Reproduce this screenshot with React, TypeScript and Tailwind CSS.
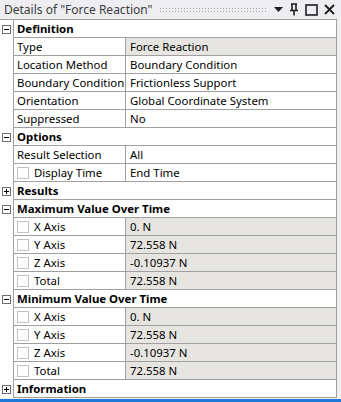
import React from "react";

type Row =
  | { kind: "section"; label: string; open: boolean }
  | { kind: "prop"; name: string; value: string; check?: boolean; grey?: boolean };

const rows: Row[] = [
  { kind: "section", label: "Definition", open: true },
  { kind: "prop", name: "Type", value: "Force Reaction", grey: true },
  { kind: "prop", name: "Location Method", value: "Boundary Condition" },
  { kind: "prop", name: "Boundary Condition", value: "Frictionless Support" },
  { kind: "prop", name: "Orientation", value: "Global Coordinate System" },
  { kind: "prop", name: "Suppressed", value: "No" },
  { kind: "section", label: "Options", open: true },
  { kind: "prop", name: "Result Selection", value: "All" },
  { kind: "prop", name: "Display Time", value: "End Time", check: true },
  { kind: "section", label: "Results", open: false },
  { kind: "section", label: "Maximum Value Over Time", open: true },
  { kind: "prop", name: "X Axis", value: "0. N", check: true, grey: true },
  { kind: "prop", name: "Y Axis", value: "72.558 N", check: true, grey: true },
  { kind: "prop", name: "Z Axis", value: "-0.10937 N", check: true, grey: true },
  { kind: "prop", name: "Total", value: "72.558 N", check: true, grey: true },
  { kind: "section", label: "Minimum Value Over Time", open: true },
  { kind: "prop", name: "X Axis", value: "0. N", check: true, grey: true },
  { kind: "prop", name: "Y Axis", value: "72.558 N", check: true, grey: true },
  { kind: "prop", name: "Z Axis", value: "-0.10937 N", check: true, grey: true },
  { kind: "prop", name: "Total", value: "72.558 N", check: true, grey: true },
  { kind: "section", label: "Information", open: false },
];

function ExpandBox({ open }: { open: boolean }) {
  return (
    <svg width="9" height="9" viewBox="0 0 9 9" className="block">
      <rect x="0.5" y="0.5" width="8" height="8" fill="white" stroke="#6e6e6e" />
      <line x1="2" y1="4.5" x2="7" y2="4.5" stroke="#000" />
      {!open && <line x1="4.5" y1="2" x2="4.5" y2="7" stroke="#000" />}
    </svg>
  );
}

function TitleBar() {
  return (
    <div className="h-[19px] flex items-center bg-[#eeeef2] pl-[4px] pr-[6px] text-[12px] text-[#3c3c3c]">
      <span className="whitespace-nowrap">Details of "Force Reaction"</span>
      {/* grip */}
      <div className="flex-1 mx-[6px] h-[5px] bg-[radial-gradient(#a8a8b0_0.6px,transparent_0.8px)] bg-[length:3px_3px]" />
      <div className="flex items-center gap-[6px]">
        <svg width="9" height="6" viewBox="0 0 9 6">
          <path d="M0 0H9L4.5 5Z" fill="#1e1e1e" />
        </svg>
        <svg width="10" height="13" viewBox="0 0 10 13">
          <path d="M2 1H8M3 1V7M7 1V7M1 7.5H9M5 8V12.5" stroke="#1e1e1e" strokeWidth="1.6" fill="none" />
        </svg>
        <svg width="13" height="12" viewBox="0 0 13 12">
          <rect x="1" y="1" width="11" height="10" stroke="#1e1e1e" strokeWidth="1.6" fill="none" />
        </svg>
        <svg width="11" height="11" viewBox="0 0 11 11">
          <path d="M1 1L10 10M10 1L1 10" stroke="#1e1e1e" strokeWidth="1.8" />
        </svg>
      </div>
    </div>
  );
}

export default function App() {
  return (
    <div className="w-[341px] h-[402px] bg-[#f0f0f0] overflow-hidden flex flex-col font-['Segoe_UI','Noto_Sans',sans-serif] text-[11.4px] text-black">
      <TitleBar />
      <div className="w-[337px] bg-white border-r border-t border-[#a0a0a0]">
        {rows.map((r, i) =>
          r.kind === "section" ? (
            <div key={i} className="flex h-[18px]">
              <div className="w-[13px] flex items-center justify-center bg-white">
                <ExpandBox open={r.open} />
              </div>
              <div className="flex-1 border-l border-b border-[#a0a0a0] flex items-center pl-[3px] font-bold">
                {r.label}
              </div>
            </div>
          ) : (
            <div key={i} className="flex h-[18px]">
              <div className="w-[13px] bg-white" />
              <div className="w-[113px] border-l border-b border-r border-[#a0a0a0] flex items-center pl-[3px] gap-[5px]">
                {r.check && (
                  <div className="w-[12px] h-[12px] border border-[#c0c0c0] bg-white shrink-0" />
                )}
                <span className="whitespace-nowrap">{r.name}</span>
              </div>
              <div
                className={`flex-1 border-b border-[#a0a0a0] flex items-center pl-[4px] ${
                  r.grey ? "bg-[#e6e5e1]" : "bg-white"
                }`}
              >
                <span className="whitespace-nowrap">{r.value}</span>
              </div>
            </div>
          )
        )}
      </div>
      <div className="mt-auto h-[3px] bg-[#1c7ad4]" />
    </div>
  );
}
